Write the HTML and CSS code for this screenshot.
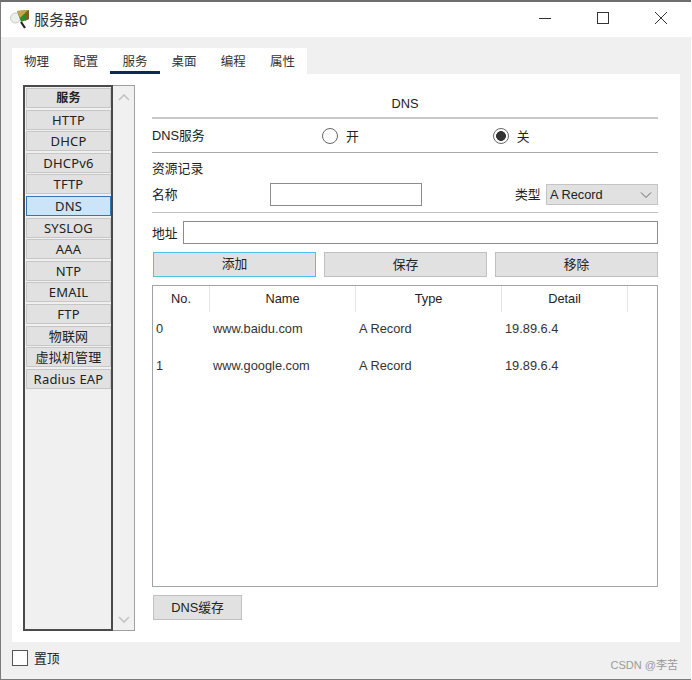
FILE: index.html
```html
<!DOCTYPE html>
<html>
<head>
  <meta charset="utf-8">
  <link rel="stylesheet" href="styles.css">
</head>
<body>
<div class="window">
  <div class="titlebar">
    <svg class="appIcon" width="22" height="22" viewBox="0 0 22 22">
      <circle cx="5.5" cy="11" r="5" fill="#eceeec" stroke="#c8ccc8"/>
      <path d="M11 15l4 6" stroke="#222" stroke-width="2.2"/>
      <path d="M7 4l12-1v9l-8 3z" fill="#2f8a2c"/>
      <path d="M7 4l12-1-5 4-4 4z" fill="#c9a24a"/>
      <path d="M15 6l4-3v9l-4 2z" fill="#7d5f28"/>
    </svg>
    <span class="title">服务器0</span>
    <div class="winButtons">
      <svg width="14" height="14" viewBox="0 0 14 14"><path d="M1 7.5h12" stroke="#333"/></svg>
      <svg width="14" height="14" viewBox="0 0 14 14"><rect x="1.5" y="1.5" width="11" height="11" fill="none" stroke="#333"/></svg>
      <svg width="14" height="14" viewBox="0 0 14 14"><path d="M1 1l12 12M13 1L1 13" stroke="#333"/></svg>
    </div>
  </div>

  <div class="content">
    <div class="tabs">
      <div class="tab">物理</div>
      <div class="tab">配置</div>
      <div class="tab active">服务</div>
      <div class="tab">桌面</div>
      <div class="tab">编程</div>
      <div class="tab">属性</div>
    </div>

    <div class="panel">
      <div class="sideBox">
        <div class="sideList">
          <div class="sideBtn head">服务</div>
          <div class="sideBtn">HTTP</div>
          <div class="sideBtn">DHCP</div>
          <div class="sideBtn">DHCPv6</div>
          <div class="sideBtn">TFTP</div>
          <div class="sideBtn selected">DNS</div>
          <div class="sideBtn">SYSLOG</div>
          <div class="sideBtn">AAA</div>
          <div class="sideBtn">NTP</div>
          <div class="sideBtn">EMAIL</div>
          <div class="sideBtn">FTP</div>
          <div class="sideBtn">物联网</div>
          <div class="sideBtn">虚拟机管理</div>
          <div class="sideBtn">Radius EAP</div>
        </div>
        <div class="scrollbar">
          <svg width="14" height="8" viewBox="0 0 14 8"><path d="M2 7l5-5 5 5" fill="none" stroke="#c4c4c4" stroke-width="1.6"/></svg>
          <svg width="14" height="8" viewBox="0 0 14 8"><path d="M2 1l5 5 5-5" fill="none" stroke="#c4c4c4" stroke-width="1.6"/></svg>
        </div>
      </div>

      <div class="main">
        <div class="mainTitle">DNS</div>
        <div class="serviceRow">
          <span class="serviceLabel">DNS服务</span>
          <span class="radio radioOn"><i class="radioMark"></i>开</span>
          <span class="radio radioOff"><i class="radioMark checked"></i>关</span>
        </div>
        <div class="recordHead">资源记录</div>
        <div class="nameRow">
          <span class="nameLabel">名称</span>
          <div class="input nameInput"></div>
          <span class="typeLabel">类型</span>
          <div class="select">A Record
            <svg width="12" height="8" viewBox="0 0 12 8"><path d="M1 1.5l5 5 5-5" fill="none" stroke="#666"/></svg>
          </div>
        </div>
        <div class="addrRow">
          <span>地址</span>
          <div class="input addrInput"></div>
        </div>
        <div class="actions">
          <div class="btn focus">添加</div>
          <div class="btn">保存</div>
          <div class="btn">移除</div>
        </div>
        <div class="table">
          <div class="tr thead">
            <div class="c1">No.</div>
            <div class="c2">Name</div>
            <div class="c3">Type</div>
            <div class="c4">Detail</div>
          </div>
          <div class="tr row">
            <div class="c1">0</div>
            <div class="c2">www.baidu.com</div>
            <div class="c3">A Record</div>
            <div class="c4">19.89.6.4</div>
          </div>
          <div class="tr row">
            <div class="c1">1</div>
            <div class="c2">www.google.com</div>
            <div class="c3">A Record</div>
            <div class="c4">19.89.6.4</div>
          </div>
        </div>
        <div class="btn cacheBtn">DNS缓存</div>
      </div>
    </div>

    <div class="footer">
      <span class="checkbox"></span>
      <span class="topLabel">置顶</span>
      <span class="watermark">CSDN @李苦</span>
    </div>
  </div>
</div>
</body>
</html>
```

FILE: styles.css
```css
html, body {
  margin: 0;
  padding: 0;
}
body {
  width: 692px;
  height: 680px;
  overflow: hidden;
  background: #fff;
  color: #222;
  font: 12.8px "Liberation Sans", "Noto Sans CJK SC", sans-serif;
}
.window {
  box-sizing: border-box;
  width: 691px;
  height: 680px;
  border: 1px solid #7a7a7a;
  border-top: 2px solid #6e6e6e;
  border-right: 0;
  display: flex;
  flex-direction: column;
}
.titlebar {
  height: 35px;
  flex: none;
  box-sizing: border-box;
  background: #fff;
  display: flex;
  align-items: center;
  padding: 0 0 3px 9px;
}
.appIcon {
  margin-right: 2px;
}
.title {
  font-size: 15px;
  color: #333;
}
.winButtons {
  margin-left: auto;
  display: flex;
  gap: 44px;
  margin-right: 23px;
}
.content {
  flex: 1;
  background: #f0f0f0;
  padding: 11px 11px 0 11px;
  display: flex;
  flex-direction: column;
}

/* tabs */
.tabs {
  display: flex;
  width: 295px;
  height: 26px;
  flex: none;
  background: #fff;
  font-size: 12.5px;
}
.tab {
  width: 49.2px;
  box-sizing: border-box;
  text-align: center;
  line-height: 28px;
  color: #333;
}
.tab.active {
  border-bottom: 3px solid #0f2a52;
  height: 26px;
}

/* panel */
.panel {
  width: 668px;
  height: 568px;
  flex: none;
  background: #fff;
  display: flex;
  box-sizing: border-box;
  padding: 11px 22px 0 11px;
}
.sideBox {
  width: 112px;
  height: 546px;
  flex: none;
  display: flex;
  box-sizing: border-box;
}
.sideList {
  width: 90px;
  box-sizing: border-box;
  background: #f0f0f0;
  border: 2px solid #4a4a4a;
  padding: 1px 0 0 1px;
  display: flex;
  flex-direction: column;
  gap: 1.6px;
}
.sideBtn {
  width: 85px;
  height: 20px;
  flex: none;
  box-sizing: border-box;
  background: #e1e1e1;
  border: 1px solid #c6c6c6;
  text-align: center;
  font: 13px/18px "Noto Sans", "Noto Sans CJK SC", sans-serif;
  letter-spacing: 0.2px;
  color: #222;
}
.sideBtn.head {
  font-weight: bold;
  font-size: 12px;
}
.sideBtn.selected {
  background: #cce4f7;
  border-color: #2f78b5;
}
.scrollbar {
  width: 22px;
  box-sizing: border-box;
  background: #f0f0f0;
  border: 1px solid #a0a0a0;
  border-left: 0;
  display: flex;
  flex-direction: column;
  justify-content: space-between;
  align-items: center;
  padding: 7px 0 6px;
}

/* right side */
.main {
  width: 506px;
  margin-left: 17px;
  display: flex;
  flex-direction: column;
}
.mainTitle {
  height: 34px;
  box-sizing: border-box;
  border-bottom: 2px solid #c8c8c8;
  text-align: center;
  padding-top: 11px;
  line-height: 16px;
}
.serviceRow {
  height: 34px;
  box-sizing: border-box;
  border-bottom: 1px solid #a8a8a8;
  display: flex;
  align-items: center;
}
.serviceLabel {
  width: 170px;
  padding-bottom: 2px;
}
.radio {
  display: flex;
  align-items: center;
  gap: 8px;
}
.radioOff {
  margin-left: 134px;
}
.radioMark {
  display: block;
  width: 14px;
  height: 14px;
  border: 1px solid #666;
  border-radius: 50%;
  background: #fff;
}
.radioMark.checked {
  background: radial-gradient(circle, #333 0 4.6px, #fff 5.2px);
}
.recordHead {
  height: 30px;
  line-height: 32px;
}
.nameRow {
  height: 30px;
  box-sizing: border-box;
  border-bottom: 1px solid #c0c0c0;
  display: flex;
  align-items: flex-start;
  line-height: 24px;
}
.nameLabel {
  width: 118px;
}
.input {
  box-sizing: border-box;
  background: #fff;
  border: 1px solid #8c8c8c;
  height: 23px;
}
.nameInput {
  width: 152px;
}
.typeLabel {
  margin-left: 93px;
  width: 31px;
}
.select {
  width: 112px;
  height: 21px;
  margin-top: 1px;
  box-sizing: border-box;
  background: #e1e1e1;
  border: 1px solid #c4c4c4;
  padding: 0 5px 0 3px;
  display: flex;
  justify-content: space-between;
  align-items: center;
  line-height: 19px;
}
.addrRow {
  display: flex;
  justify-content: space-between;
  align-items: center;
  margin-top: 8px;
  height: 23px;
}
.addrInput {
  width: 475px;
}
.actions {
  display: flex;
  margin-top: 8px;
  margin-left: 1px;
  gap: 8px;
}
.btn {
  box-sizing: border-box;
  height: 25px;
  width: 163px;
  background: #e1e1e1;
  border: 1px solid #c0c0c0;
  text-align: center;
  line-height: 23px;
}
.btn.focus {
  border: 1.5px solid #4cc3e6;
  line-height: 22px;
}
.table {
  margin-top: 8px;
  height: 302px;
  box-sizing: border-box;
  border: 1px solid #a0a4a8;
  background: #fff;
}
.tr {
  display: flex;
}
.tr > div {
  box-sizing: border-box;
  flex: none;
  white-space: nowrap;
}
.c1 { width: 57px; }
.c2 { width: 146px; }
.c3 { width: 146px; }
.c4 { width: 126px; }
.thead {
  height: 26px;
  line-height: 25px;
  text-align: center;
}
.thead > div {
  border-right: 1px solid #e4e4e4;
}
.row {
  height: 37px;
  line-height: 35px;
  padding-left: 3px;
  color: #333;
}
.row:nth-child(2) {
  height: 36px;
  line-height: 33px;
}
.cacheBtn {
  width: 89px;
  height: 25px;
  margin-top: 8px;
  margin-left: 1px;
}

/* footer */
.footer {
  flex: 1;
  display: flex;
  position: relative;
  align-items: flex-start;
  padding-top: 8px;
}
.checkbox {
  width: 16px;
  height: 16px;
  box-sizing: border-box;
  background: #fff;
  border: 1px solid #555;
}
.topLabel {
  margin-left: 6px;
  line-height: 18px;
}
.watermark {
  position: absolute;
  right: 2px;
  bottom: 7px;
  font-size: 11px;
  color: #9a9a9a;
}
```
